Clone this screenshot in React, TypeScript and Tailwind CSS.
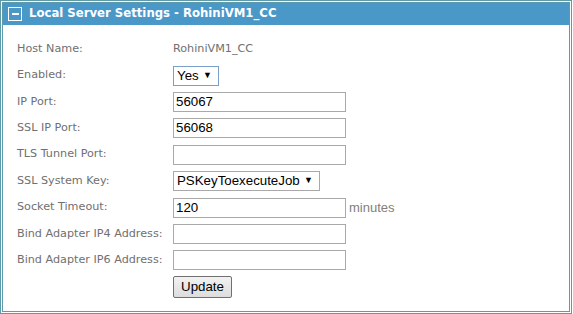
import React from 'react';

const rows: { label: string; kind: 'text' | 'select' | 'input'; value?: string; width?: string; suffix?: string; focus?: boolean }[] = [
  { label: 'Host Name:', kind: 'text', value: 'RohiniVM1_CC' },
  { label: 'Enabled:', kind: 'select', value: 'Yes', width: 'w-[46px]', focus: true },
  { label: 'IP Port:', kind: 'input', value: '56067' },
  { label: 'SSL IP Port:', kind: 'input', value: '56068' },
  { label: 'TLS Tunnel Port:', kind: 'input', value: '' },
  { label: 'SSL System Key:', kind: 'select', value: 'PSKeyToexecuteJob', width: 'w-[147px]' },
  { label: 'Socket Timeout:', kind: 'input', value: '120', suffix: 'minutes' },
  { label: 'Bind Adapter IP4 Address:', kind: 'input', value: '' },
  { label: 'Bind Adapter IP6 Address:', kind: 'input', value: '' },
];

const labelFont = { fontFamily: 'Verdana, "DejaVu Sans", sans-serif' };
const fieldFont = { fontFamily: '"Liberation Sans", Arial, sans-serif' };

export default function App() {
  return (
    <div className="w-[572px] h-[314px] border border-[#5f9aab] p-px bg-white">
      <div className="h-full border border-[#5f9aab] flex flex-col">
        <div className="h-[22px] bg-[#4a98c8] flex items-center pl-[5px] gap-[7px]">
          <div className="w-[14px] h-[14px] border border-white flex items-center justify-center">
            <div className="w-[7px] h-[2px] bg-white" />
          </div>
          <span className="text-white font-bold text-[11.7px]" style={labelFont}>
            Local Server Settings - RohiniVM1_CC
          </span>
        </div>
        <div className="pl-[14px] pt-[11px]">
          {rows.map((r) => (
            <div key={r.label} className="h-[26.4px] flex items-center">
              <div className="w-[156px] text-[11.2px] text-[#707070]" style={labelFont}>{r.label}</div>
              {r.kind === 'text' && (
                <div className="text-[11.2px] text-[#707070]" style={labelFont}>{r.value}</div>
              )}
              {r.kind === 'input' && (
                <div className="flex items-center">
                  <div
                    className="w-[173px] h-[20px] border border-[#a9a9a9] px-[2px] flex items-center text-[13.3px] text-black"
                    style={fieldFont}
                  >
                    {r.value}
                  </div>
                  {r.suffix && (
                    <span className="ml-[3px] text-[13px] text-[#808080]" style={fieldFont}>{r.suffix}</span>
                  )}
                </div>
              )}
              {r.kind === 'select' && (
                <div
                  className={`${r.width} h-[20px] border ${r.focus ? 'border-[#7aa0c9]' : 'border-[#a9a9a9]'} pl-[3px] pr-[6px] flex items-center justify-between text-[13.3px] text-black`}
                  style={fieldFont}
                >
                  <span>{r.value}</span>
                  <span className="text-[9px]">▼</span>
                </div>
              )}
            </div>
          ))}
          <div className="h-[26.4px] flex items-center">
            <div className="w-[156px]" />
            <button
              className="w-[59px] h-[22px] border border-[#707070] rounded-[2px] bg-gradient-to-b from-[#f2f2f2] to-[#dddddd] text-[13.3px] text-black"
              style={fieldFont}
            >
              Update
            </button>
          </div>
        </div>
      </div>
    </div>
  );
}
